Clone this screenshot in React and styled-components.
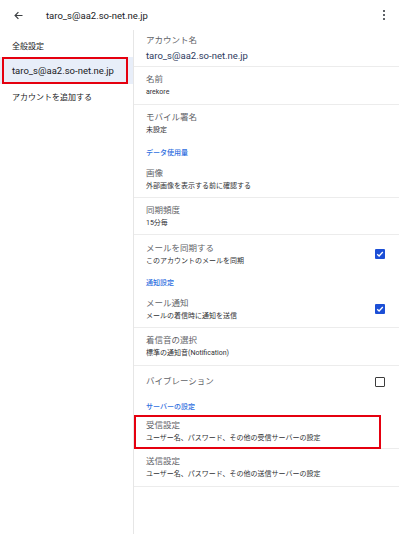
import React from 'react'
import styled, { createGlobalStyle } from 'styled-components'

const GlobalStyle = createGlobalStyle`
  html, body {
    margin: 0;
    padding: 0;
    background: #ffffff;
  }
  body {
    font-family: Roboto, "Noto Sans CJK JP", sans-serif;
    -webkit-font-smoothing: antialiased;
  }
`

const Page = styled.div`
  width: 399px;
  height: 534px;
  display: flex;
  flex-direction: column;
  background: #fff;
  overflow: hidden;
`

const TopBar = styled.header`
  height: 30px;
  display: flex;
  align-items: center;
  padding: 0 12px 0 13px;
  box-sizing: border-box;
`

const BackButton = styled.div`
  width: 10px;
  height: 10px;
  display: flex;
  align-items: center;
  justify-content: center;
  margin-right: 23px;
`

const BarTitle = styled.div`
  flex: 1;
  font-size: 9.5px;
  color: #202124;
`

const Kebab = styled.div`
  display: flex;
  flex-direction: column;
  gap: 2px;
  margin-right: 2px;

  span {
    width: 2px;
    height: 2px;
    background: #5f6368;
  }
`

const Body = styled.div`
  flex: 1;
  display: flex;
`

const SidePanel = styled.nav`
  width: 134px;
  border-right: 1px solid #e6e6e6;
  box-sizing: border-box;
  padding-top: 3px;
`

const SideRow = styled.div`
  position: relative;
  height: ${p => (p.$active ? 27 : 24)}px;
  display: flex;
  align-items: center;
  padding-left: 12px;
  font-size: ${p => (p.$latin ? 9.5 : 8)}px;
  color: #202124;
  background: ${p => (p.$active ? '#e8eef9' : 'transparent')};

  ${p => p.$active && `
    &::after {
      content: '';
      position: absolute;
      left: 2px;
      top: 0;
      right: 5px;
      bottom: 0;
      border: 2px solid #e5000f;
    }
  `}
`

const Content = styled.main`
  flex: 1;
  display: flex;
  flex-direction: column;
`

const Item = styled.div`
  position: relative;
  display: flex;
  align-items: center;
  box-sizing: border-box;
  height: ${p => p.$h || 38}px;
  padding: 0 14px 0 12px;
  border-bottom: ${p => (p.$divider ? '1px solid #ececec' : 'none')};

  ${p => p.$highlight && `
    &::after {
      content: '';
      position: absolute;
      left: 0;
      top: 0;
      right: 18px;
      bottom: -1px;
      border: 2px solid #e5000f;
    }
  `}
`

const ItemText = styled.div`
  flex: 1;
  display: flex;
  flex-direction: column;
  gap: ${p => p.$gap ?? 2}px;
`

const Title = styled.div`
  font-size: 8.5px;
  line-height: 11px;
  color: #5f6368;
`

const Sub = styled.div`
  font-size: 7px;
  line-height: 10px;
  color: #303134;
`

const Value = styled.div`
  font-size: 9.5px;
  line-height: 12px;
  color: #2d3a5e;
`

const Section = styled.div`
  height: ${p => p.$h || 18}px;
  box-sizing: border-box;
  display: flex;
  align-items: flex-end;
  padding: 0 0 3px 12px;
  font-size: 7px;
  line-height: 10px;
  color: #2f6fe0;
  font-weight: 500;
`

const Box = styled.div`
  width: 10px;
  height: 10px;
  box-sizing: border-box;
  border-radius: 1px;
  display: flex;
  align-items: center;
  justify-content: center;
  background: ${p => (p.$checked ? '#1c4fd6' : '#fff')};
  border: ${p => (p.$checked ? 'none' : '1.6px solid #3c3c3c')};
`

const Check = ({ checked }) => (
  <Box $checked={checked}>
    {checked && (
      <svg width="8" height="8" viewBox="0 0 8 8">
        <path d="M1.2 4.2 L3.1 6 L6.8 2" fill="none" stroke="#fff" strokeWidth="1.3" />
      </svg>
    )}
  </Box>
)

const Row = ({ title, sub, check, divider = true, h, highlight }) => (
  <Item $divider={divider} $h={h} $highlight={highlight}>
    <ItemText>
      <Title>{title}</Title>
      {sub && <Sub>{sub}</Sub>}
    </ItemText>
    {check !== undefined && <Check checked={check} />}
  </Item>
)

export default function App() {
  return (
    <Page>
      <GlobalStyle />
      <TopBar>
        <BackButton>
          <svg width="9" height="9" viewBox="0 0 9 9">
            <path d="M8.5 4.5 H1.2 M4.4 1.2 L1.1 4.5 L4.4 7.8" fill="none" stroke="#3c4043" strokeWidth="1.2" />
          </svg>
        </BackButton>
        <BarTitle>taro_s@aa2.so-net.ne.jp</BarTitle>
        <Kebab>
          <span />
          <span />
          <span />
        </Kebab>
      </TopBar>
      <Body>
        <SidePanel>
          <SideRow>全般設定</SideRow>
          <SideRow $active $latin>taro_s@aa2.so-net.ne.jp</SideRow>
          <SideRow>アカウントを追加する</SideRow>
        </SidePanel>
        <Content>
          <Item $divider $h={37}>
            <ItemText $gap={4}>
              <Title>アカウント名</Title>
              <Value>taro_s@aa2.so-net.ne.jp</Value>
            </ItemText>
          </Item>
          <Row title="名前" sub="arekore" />
          <Row title="モバイル署名" sub="未設定" divider={false} h={37} />
          <Section $h={19}>データ使用量</Section>
          <Row title="画像" sub="外部画像を表示する前に確認する" h={37} />
          <Row title="同期頻度" sub="15分毎" h={37} />
          <Row title="メールを同期する" sub="このアカウントのメールを同期" check={true} divider={false} />
          <Section>通知設定</Section>
          <Row title="メール通知" sub="メールの着信時に通知を送信" check={true} h={37} />
          <Row title="着信音の選択" sub="標準の通知音(Notification)" />
          <Row title="バイブレーション" check={false} divider={false} h={31} />
          <Section>サーバーの設定</Section>
          <Row title="受信設定" sub="ユーザー名、パスワード、その他の受信サーバーの設定" h={34} highlight />
          <Row title="送信設定" sub="ユーザー名、パスワード、その他の送信サーバーの設定" />
        </Content>
      </Body>
    </Page>
  )
}
